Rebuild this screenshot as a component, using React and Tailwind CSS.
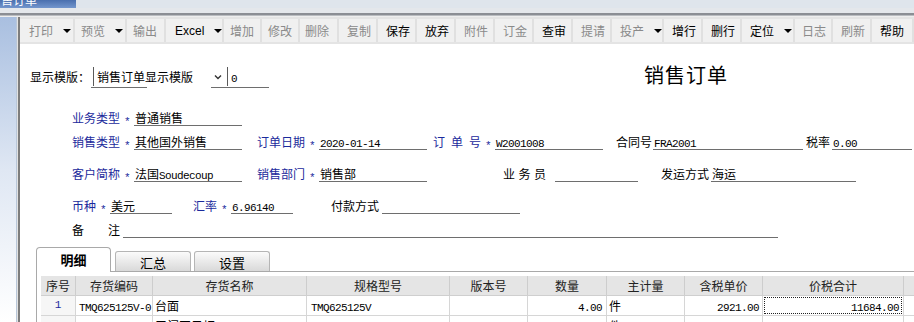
import React from 'react';

const cn = "font-['Noto_Sans_CJK_SC','Noto_Sans',sans-serif]";
const mono = "font-['Liberation_Mono',monospace] text-[11px] tracking-[-0.6px]";

const tools = [
  { t: '打印', c: 'w-[55px] pl-[9px]', arrow: true },
  { t: '预览', c: 'w-[52px] pl-[6px]', arrow: true },
  { t: '输出', c: 'w-[39px] pl-[6px]' },
  { t: 'Excel', c: 'w-[58px] pl-[9px]', arrow: true, on: true, latin: true },
  { t: '增加', c: 'w-[38px] pl-[6px]' },
  { t: '修改', c: 'w-[38px] pl-[6px]' },
  { t: '删除', c: 'w-[39px] pl-[5px]' },
  { t: '复制', c: 'w-[39px] pl-[8px]' },
  { t: '保存', c: 'w-[39px] pl-[8px]', on: true },
  { t: '放弃', c: 'w-[39px] pl-[8px]', on: true },
  { t: '附件', c: 'w-[39px] pl-[8px]' },
  { t: '订金', c: 'w-[39px] pl-[8px]' },
  { t: '查审', c: 'w-[39px] pl-[8px]', on: true },
  { t: '提请', c: 'w-[39px] pl-[8px]' },
  { t: '投产', c: 'w-[52px] pl-[8px]', arrow: true },
  { t: '增行', c: 'w-[39px] pl-[8px]', on: true },
  { t: '删行', c: 'w-[39px] pl-[8px]', on: true },
  { t: '定位', c: 'w-[53px] pl-[8px]', arrow: true, on: true },
  { t: '日志', c: 'w-[38px] pl-[7px]' },
  { t: '刷新', c: 'w-[39px] pl-[8px]' },
  { t: '帮助', c: 'w-[42px] pl-[8px]', on: true },
];

const cols = [
  { t: '序号', c: 'w-[35px]' },
  { t: '存货编码', c: 'w-[77px]' },
  { t: '存货名称', c: 'w-[154px]' },
  { t: '规格型号', c: 'w-[143px]' },
  { t: '版本号', c: 'w-[78px]' },
  { t: '数量', c: 'w-[79px]' },
  { t: '主计量', c: 'w-[78px]' },
  { t: '含税单价', c: 'w-[78px]' },
  { t: '价税合计', c: 'w-[141px]' },
  { t: '', c: 'w-[30px]' },
];

const Lbl = ({ c, blue, children }) => (
  <div className={`${c} shrink-0 leading-[16px] whitespace-nowrap ${blue ? 'text-[#1b2a9c]' : 'text-black'}`}>
    {children}
  </div>
);

const Star = () => (
  <div className={`w-[14px] shrink-0 text-center text-[#1b2a9c] leading-[16px] pt-[4px] ${mono}`}>*</div>
);

const Val = ({ c, children }) => (
  <div className={`${c} shrink-0 h-[16px] border-b border-[#6e6e6e] leading-[15px] pl-[1px] whitespace-nowrap overflow-hidden`}>
    {children}
  </div>
);

const Spread = ({ c, chars }) => (
  <div className={`${c} shrink-0 flex justify-between leading-[16px]`}>
    {chars.map((ch) => (
      <span key={ch}>{ch}</span>
    ))}
  </div>
);

const Arrow = () => (
  <span className="ml-[10px] w-0 h-0 border-x-[4px] border-x-transparent border-t-[4px] border-t-black" />
);

export default function App() {
  return (
    <div className={`w-[914px] h-[322px] overflow-hidden bg-white text-[12px] text-black ${cn}`}>
      {/* window title remains */}
      <div className="flex h-[8px] overflow-hidden">
        <div className="w-[76px] shrink-0 bg-linear-to-b from-[#4a6fae] to-[#7396cd] text-white overflow-hidden">
          <span className="block -mt-[6px] pl-[1px] leading-[12px]">售订单</span>
        </div>
        <div className="flex-1 bg-[#dfe5ec]" />
      </div>
      <div className="h-[9px] bg-[#e4e7eb] flex flex-col justify-end">
        <div className="h-[2px] bg-[#8b8e94]" />
        <div className="h-[1px] bg-[#b9bcc0]" />
        <div className="h-[1px] bg-[#eeeeee]" />
      </div>

      <div className="flex h-[305px]">
        {/* left strip */}
        <div className="w-[16px] shrink-0 bg-linear-to-b from-[#a9bfe0] via-[#dfe7f3] to-white" />
        <div className="w-[4px] shrink-0 border-l border-[#b8c6d8] border-r-2 border-r-[#7d7d7d] bg-[#e2e2e2]" />

        <div className="flex-1 min-w-0 overflow-hidden">
          {/* toolbar */}
          <div className="h-[27px] bg-[#e4e4e4] flex items-center">
            {tools.map((b) => (
              <div
                key={b.t}
                className={`${b.c} h-[23px] shrink-0 flex items-center bg-[#f0f0f0] border-r-2 border-[#e0e0e0] ${b.on ? 'text-black' : 'text-[#8a8a8a]'}`}
              >
                <span className={b.latin ? "font-['Liberation_Sans',sans-serif] text-[12px]" : ''}>{b.t}</span>
                {b.arrow && <Arrow />}
              </div>
            ))}
          </div>

          {/* header row: template + title */}
          <div className="flex items-start h-[22px] mt-[22px]">
            <div className="ml-[10px] w-[63px] shrink-0 leading-[22px]">显示模版：</div>
            <div className="shrink-0 flex flex-col">
              <div className="w-[135px] h-[19px] mt-[1px] border-l border-r border-[#5a5a5a] flex items-center pl-[3px]">
                <span className="flex-1 leading-[15px]">销售订单显示模版</span>
                <svg width="8" height="6" viewBox="0 0 8 6" className="mr-[5px]">
                  <path d="M1 1.5 L4 4.5 L7 1.5" fill="none" stroke="#333" strokeWidth="1.4" />
                </svg>
              </div>
              <div className="flex h-[2px]">
                <div className="-ml-[2px] w-[56px] border-b border-[#6e6e6e]" />
                <div className="ml-[64px] w-[19px] border-b border-[#6e6e6e]" />
              </div>
            </div>
            <div className="w-[39px] shrink-0 h-[22px] border-b border-[#6e6e6e] pl-[1px] leading-[22px]">
              <span className={mono}>0</span>
            </div>
            <div className="ml-[375px] shrink-0 text-[20px] tracking-[1px] leading-[20px] -mt-[1px]">销售订单</div>
          </div>

          {/* 业务类型 */}
          <div className="flex h-[16px] mt-[22px]">
            <div className="w-[52px] shrink-0" />
            <Lbl c="w-[48px]" blue>业务类型</Lbl>
            <Star />
            <Val c="w-[108px]">普通销售</Val>
          </div>

          {/* 销售类型 row */}
          <div className="flex h-[16px] mt-[8px]">
            <div className="w-[52px] shrink-0" />
            <Lbl c="w-[48px]" blue>销售类型</Lbl>
            <Star />
            <Val c="w-[108px]">其他国外销售</Val>
            <div className="w-[15px] shrink-0" />
            <Lbl c="w-[48px]" blue>订单日期</Lbl>
            <Star />
            <Val c="w-[108px]"><span className={mono}>2020-01-14</span></Val>
            <div className="w-[6px] shrink-0" />
            <Spread c="w-[48px] text-[#1b2a9c]" chars={['订', '单', '号']} />
            <Star />
            <Val c="w-[108px]"><span className={mono}>W2001008</span></Val>
            <div className="w-[13px] shrink-0" />
            <Lbl c="w-[37px]">合同号</Lbl>
            <Val c="w-[150px]"><span className={mono}>FRA2001</span></Val>
            <div className="w-[3px] shrink-0" />
            <Lbl c="w-[26px]">税率</Lbl>
            <Val c="w-[80px]"><span className={mono}>0.00</span></Val>
          </div>

          {/* 客户简称 row */}
          <div className="flex h-[16px] mt-[16px]">
            <div className="w-[52px] shrink-0" />
            <Lbl c="w-[48px]" blue>客户简称</Lbl>
            <Star />
            <Val c="w-[108px]">法国<span className={mono}>Soudecoup</span></Val>
            <div className="w-[15px] shrink-0" />
            <Lbl c="w-[48px]" blue>销售部门</Lbl>
            <Star />
            <Val c="w-[108px]">销售部</Val>
            <div className="w-[76px] shrink-0" />
            <Spread c="w-[43px]" chars={['业', '务', '员']} />
            <div className="w-[9px] shrink-0" />
            <Val c="w-[83px]" />
            <div className="w-[23px] shrink-0" />
            <Lbl c="w-[50px]">发运方式</Lbl>
            <Val c="w-[145px]">海运</Val>
          </div>

          {/* 币种 row */}
          <div className="flex h-[16px] mt-[16px]">
            <div className="w-[52px] shrink-0" />
            <Lbl c="w-[24px]" blue>币种</Lbl>
            <Star />
            <Val c="w-[62px]">美元</Val>
            <div className="w-[21px] shrink-0" />
            <Lbl c="w-[24px]" blue>汇率</Lbl>
            <Star />
            <Val c="w-[62px]"><span className={mono}>6.96140</span></Val>
            <div className="w-[38px] shrink-0" />
            <Lbl c="w-[51px]">付款方式</Lbl>
            <Val c="w-[138px]" />
          </div>

          {/* 备注 row */}
          <div className="flex h-[16px] mt-[8px]">
            <div className="w-[52px] shrink-0" />
            <Spread c="w-[48px]" chars={['备', '注']} />
            <div className="w-[3px] shrink-0" />
            <Val c="w-[655px]" />
          </div>

          {/* tabs */}
          <div className="flex items-end h-[24px] mt-[9px] ml-[16px]">
            <div className="relative z-10 -mb-px w-[75px] h-[25px] bg-white border border-b-0 border-[#a9a9a9] rounded-t-[4px] font-bold text-center leading-[24px] text-[13px]">
              明细
            </div>
            <div className="ml-[4px] w-[76px] h-[20px] border border-b-0 border-[#b5b5b5] rounded-t-[3px] bg-linear-to-b from-[#fbfbfb] to-[#d9d9d9] text-center leading-[22px] text-[13px]">
              汇总
            </div>
            <div className="ml-[3px] w-[76px] h-[20px] border border-b-0 border-[#b5b5b5] rounded-t-[3px] bg-linear-to-b from-[#fbfbfb] to-[#d9d9d9] text-center leading-[22px] text-[13px]">
              设置
            </div>
          </div>

          {/* grid panel */}
          <div className="ml-[16px] border-l border-t border-[#a9a9a9] pl-[4px] pt-[4px]">
            <div className="flex h-[20px] bg-[#e5e5e5] border-b border-[#cfcfcf]">
              {cols.map((col, i) => (
                <div
                  key={i}
                  className={`${col.c} shrink-0 border-r border-[#cdcdcd] text-center leading-[19px] text-[#222]`}
                >
                  {col.t}
                </div>
              ))}
            </div>
            <div className="flex h-[20px] border-b border-[#d6d6d6]">
              <div className="w-[35px] shrink-0 border-r border-[#d6d6d6] bg-[#f6f6f6] text-center leading-[19px] text-[#1b2a9c] text-[11px] font-['Liberation_Mono',monospace]">1</div>
              <div className="w-[77px] shrink-0 border-r border-[#d6d6d6] pl-[3px] leading-[19px]"><span className={mono}>TMQ625125V-0</span></div>
              <div className="w-[154px] shrink-0 border-r border-[#d6d6d6] pl-[2px] leading-[19px] overflow-hidden">台面</div>
              <div className="w-[143px] shrink-0 border-r border-[#d6d6d6] pl-[4px] leading-[19px]"><span className={mono}>TMQ625125V</span></div>
              <div className="w-[78px] shrink-0 border-r border-[#d6d6d6]" />
              <div className="w-[79px] shrink-0 border-r border-[#d6d6d6] pr-[4px] text-right leading-[19px]"><span className={mono}>4.00</span></div>
              <div className="w-[78px] shrink-0 border-r border-[#d6d6d6] pl-[2px] leading-[19px]">件</div>
              <div className="w-[78px] shrink-0 border-r border-[#d6d6d6] pr-[3px] text-right leading-[19px]"><span className={mono}>2921.00</span></div>
              <div className="w-[141px] shrink-0 border-r border-[#d6d6d6] p-[1px]">
                <div className="h-full border border-dotted border-[#222] pr-[2px] text-right leading-[16px]">
                  <span className={mono}>11684.00</span>
                </div>
              </div>
              <div className="w-[30px] shrink-0" />
            </div>
            <div className="flex h-[20px]">
              <div className="w-[35px] shrink-0 border-r border-[#d6d6d6] bg-[#f6f6f6]" />
              <div className="w-[77px] shrink-0 border-r border-[#d6d6d6] pl-[3px] leading-[19px]"><span className={mono}>TMQ625125V-1</span></div>
              <div className="w-[154px] shrink-0 border-r border-[#d6d6d6] pl-[2px] leading-[19px]">三门回风柜</div>
              <div className="w-[143px] shrink-0 border-r border-[#d6d6d6]" />
              <div className="w-[78px] shrink-0 border-r border-[#d6d6d6]" />
              <div className="w-[79px] shrink-0 border-r border-[#d6d6d6]" />
              <div className="w-[78px] shrink-0 border-r border-[#d6d6d6] pl-[2px] leading-[19px]">件</div>
              <div className="w-[78px] shrink-0 border-r border-[#d6d6d6]" />
              <div className="w-[141px] shrink-0 border-r border-[#d6d6d6]" />
            </div>
          </div>
        </div>
      </div>
    </div>
  );
}
